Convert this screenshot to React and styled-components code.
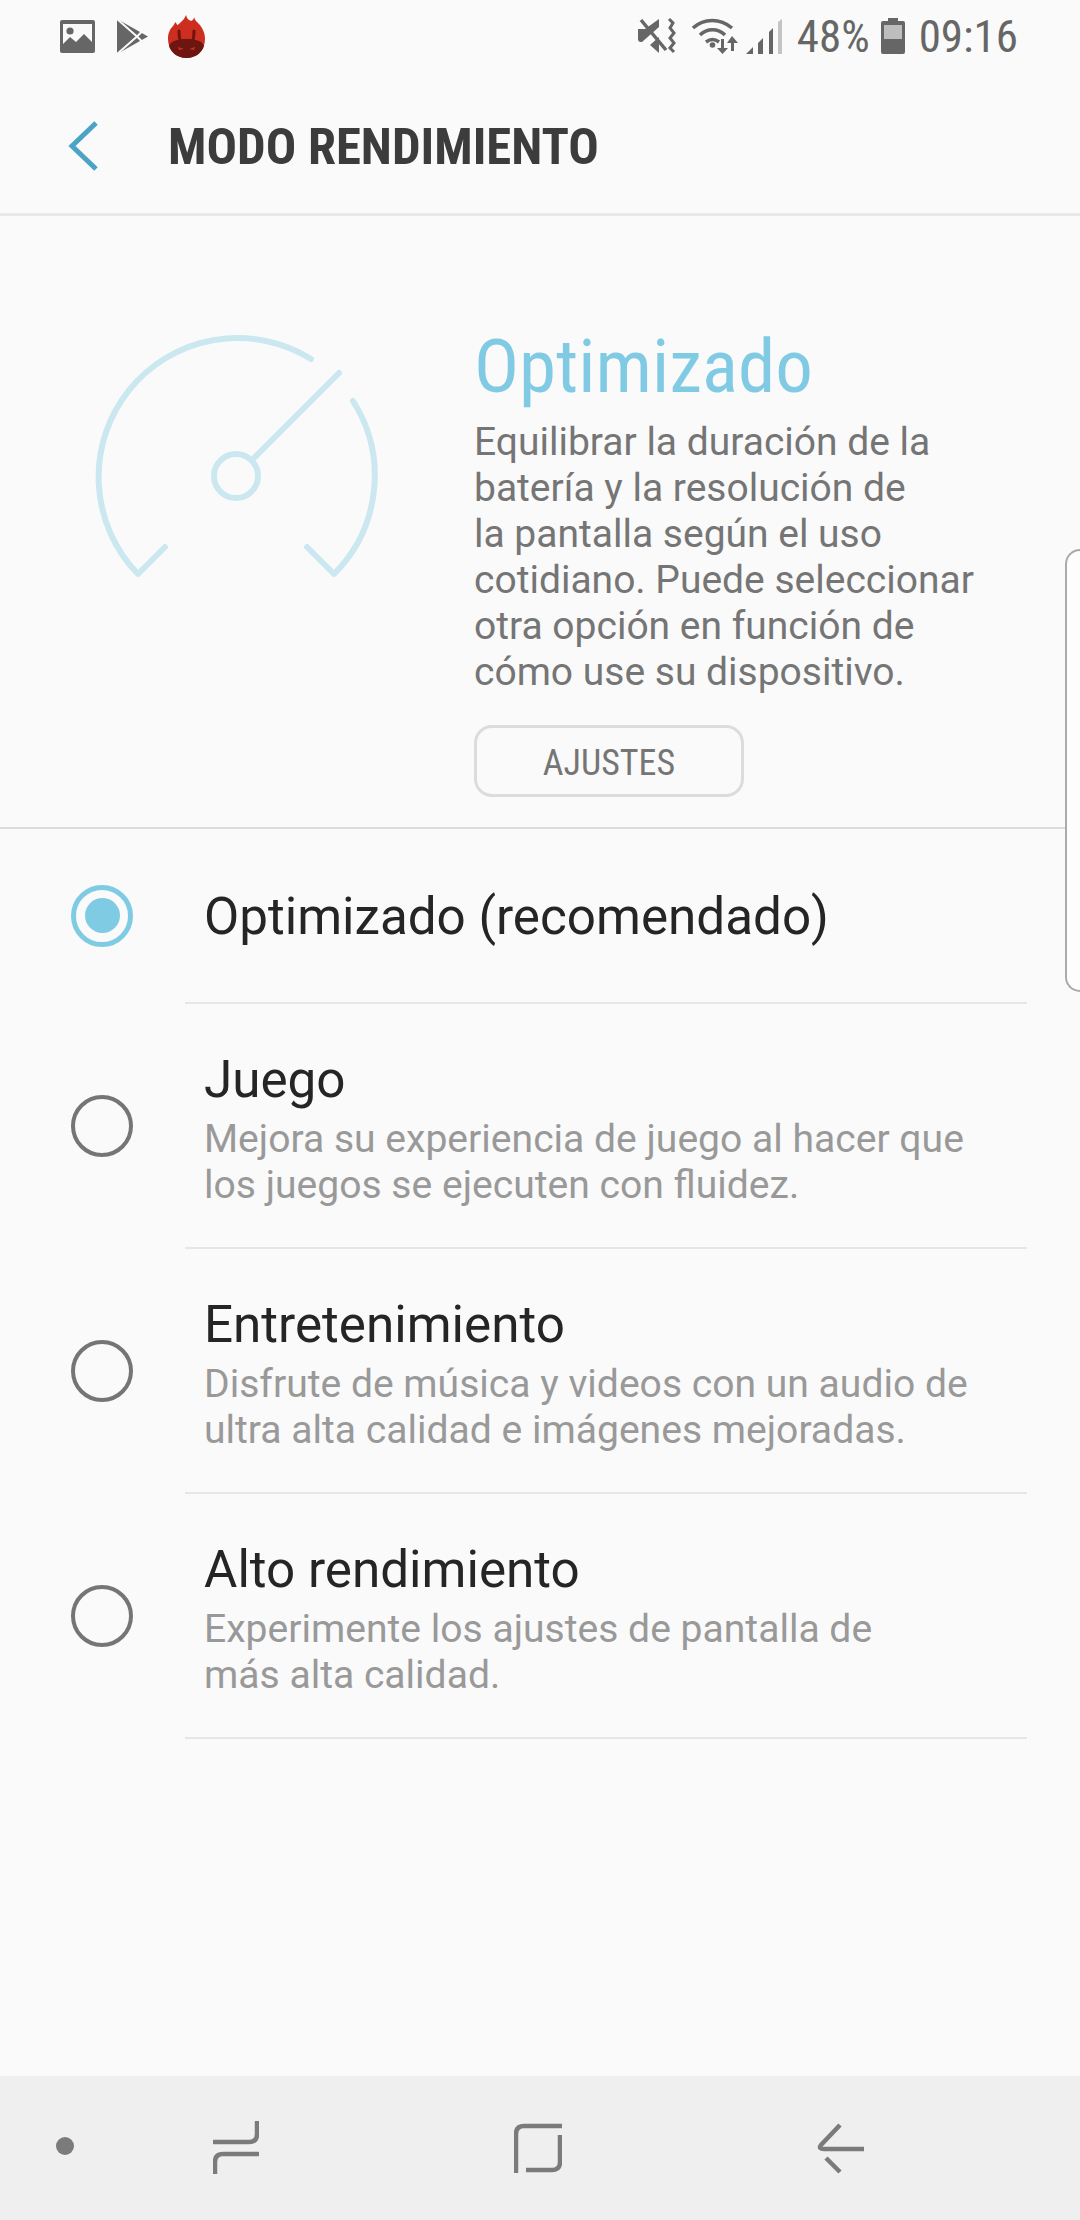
import React from "react";
import styled, { createGlobalStyle } from "styled-components";

const Global = createGlobalStyle`
  html, body { margin: 0; padding: 0; background: #fafafa; }
  body { font-family: Roboto, "Liberation Sans", sans-serif; }
`;

const Screen = styled.div`
  position: relative;
  width: 1080px;
  height: 2220px;
  background: #fafafa;
  display: flex;
  flex-direction: column;
  overflow: hidden;
`;

const StatusBar = styled.div`
  height: 72px;
  display: flex;
  align-items: center;
  padding: 0 62px 0 60px;
  color: #666;
`;
const StatusGroup = styled.div`
  display: flex;
  align-items: center;
`;
const Spacer = styled.div`flex: 1;`;
const StatusIcon = styled.svg`
  display: block;
  flex: none;
  margin-left: ${(p) => p.$ml || 0}px;
`;
const StatusText = styled.span`
  font-size: 45px;
  font-stretch: 75%;
  line-height: 72px;
  padding-top: 2px;
  margin-left: ${(p) => p.$ml || 0}px;
`;

const AppBar = styled.div`
  height: 144px;
  display: flex;
  align-items: center;
  padding: 7px 0 0 67px;
  box-sizing: border-box;
  border-bottom: 3px solid #e8e8e8;
  flex: none;
`;
const BackChevron = styled.svg`
  display: block;
  flex: none;
`;
const AppTitle = styled.h1`
  margin: 0 0 0 69px;
  font-size: 50.7px;
  font-weight: 700;
  font-stretch: 75%;
  color: #3c3c3c;
`;

const Hero = styled.section`
  height: 613px;
  flex: none;
  display: flex;
  padding: 113px 0 0 94px;
  box-sizing: border-box;
  border-bottom: 2px solid #dcdcdc;
`;
const Gauge = styled.svg`
  display: block;
  flex: none;
`;
const HeroText = styled.div`
  margin: -5px 0 0 95px;
  display: flex;
  flex-direction: column;
  align-items: flex-start;
`;
const HeroTitle = styled.h2`
  margin: 0;
  font-size: 75px;
  line-height: 84px;
  font-weight: 400;
  font-stretch: 75%;
  color: #80cbe3;
`;
const HeroDesc = styled.p`
  margin: 11px 0 0;
  font-size: 39px;
  line-height: 46px;
  color: #757575;
`;
const SettingsButton = styled.button`
  margin-top: 30px;
  width: 270px;
  height: 72px;
  box-sizing: border-box;
  border: 3px solid #dcdcdc;
  border-radius: 18px;
  background: transparent;
  color: #757575;
  font-family: inherit;
  font-size: 36px;
  font-stretch: 75%;
  padding: 4px 0 0;
`;

const List = styled.div`
  display: flex;
  flex-direction: column;
  padding: 0 53px 0 0;
`;
const Row = styled.div`
  display: flex;
  align-items: center;
  height: ${(p) => p.$h}px;
  box-sizing: border-box;
  padding-left: 71px;
`;
const Radio = styled.span`
  flex: none;
  width: 62px;
  height: 62px;
  margin-top: -2px;
  box-sizing: border-box;
  border-radius: 50%;
  border: ${(p) => (p.$on ? "5px solid #7fcbe4" : "4px solid #757575")};
  display: flex;
  align-items: center;
  justify-content: center;
`;
const RadioDot = styled.span`
  width: 35px;
  height: 35px;
  border-radius: 50%;
  background: #7fcbe4;
`;
const RowBody = styled.div`
  flex: 1;
  align-self: stretch;
  display: flex;
  flex-direction: column;
  justify-content: center;
  border-bottom: 2px solid #e6e6e6;
  margin-left: 52px;
  padding: ${(p) => p.$pt}px 0 0 19px;
`;
const RowTitle = styled.div`
  font-size: 51.2px;
  line-height: 58px;
  color: #252525;
`;
const RowDesc = styled.div`
  margin-top: 7px;
  font-size: 39.1px;
  line-height: 46px;
  color: #999;
`;

const Handle = styled.div`
  position: absolute;
  right: 0;
  top: 549px;
  width: 15px;
  height: 443px;
  box-sizing: border-box;
  border: 2px solid #aaa;
  border-right: none;
  border-radius: 16px 0 0 16px;
  background: #fdfdfd;
`;

const NavBar = styled.nav`
  margin-top: auto;
  height: 144px;
  flex: none;
  background: #efefef;
  display: flex;
  align-items: center;
  padding-left: 56px;
`;
const NavDot = styled.span`
  width: 18px;
  height: 18px;
  border-radius: 50%;
  background: #7b7b7b;
  margin-top: -4px;
`;
const NavIcon = styled.svg`
  display: block;
  flex: none;
  margin-left: ${(p) => p.$ml}px;
  fill: none;
  stroke: #7b7b7b;
  stroke-width: 4.5;
`;

const rows = [
  { title: "Juego", lines: ["Mejora su experiencia de juego al hacer que", "los juegos se ejecuten con fluidez."] },
  { title: "Entretenimiento", lines: ["Disfrute de música y videos con un audio de", "ultra alta calidad e imágenes mejoradas."] },
  { title: "Alto rendimiento", lines: ["Experimente los ajustes de pantalla de", "más alta calidad."] },
];

const Br = ({ lines }) => lines.map((l, i) => <React.Fragment key={i}>{l}{i < lines.length - 1 && <br />}</React.Fragment>);

export default function App() {
  return (
    <Screen>
      <Global />
      <StatusBar>
        <StatusGroup>
          <StatusIcon width="35" height="33" viewBox="0 0 35 33">
            <path fillRule="evenodd" fill="#666" d="M2 0h31a2 2 0 0 1 2 2v29a2 2 0 0 1-2 2H2a2 2 0 0 1-2-2V2a2 2 0 0 1 2-2zM3 4v20l7-7 6 5 8-8 8 8V4z" />
            <circle cx="10" cy="11" r="3.6" fill="#666" />
          </StatusIcon>
          <StatusIcon $ml={22} width="31" height="35" viewBox="0 0 31 35">
            <path fill="#666" d="M0 0l31 17.500L0 35z" />
            <path fill="none" stroke="#fafafa" strokeWidth="2" d="M0 0l20 17.500M0 35l20-17.500M20 17.500l5-5M20 17.500l5 5" />
          </StatusIcon>
          <StatusIcon $ml={20} width="37" height="43" viewBox="0 0 37 43">
            <path fill="#cc2e20" d="M18 0c1 4 3 5 5 6 2-1 3-2 3-4 1 3 2 4 4 6 4 4 7 9 7 16 0 11-8 19-18.500 19S0 35 0 24c0-6 2-10 5-13 1-1 2-3 2-4 1 1 2 2 2 3 1 0 2-1 4-3 2-2 4-4 5-7z" />
            <path fill="#6d1510" d="M1 31c2-5 8-7 17.500-7S34 26 36 31c-2 7-9 12-17.500 12S3 38 1 31z" />
            <path fill="none" stroke="#6d1510" strokeWidth="3" strokeLinecap="round" d="M12 25c-1-3-1-6-1-9M25 25c1-3 1-6 1-9" />
            <path fill="#cc2e20" d="M10 32l6 2-5 1zM27 32l-6 2 5 1z" />
          </StatusIcon>
        </StatusGroup>
        <Spacer />
        <StatusGroup>
          <StatusIcon width="38" height="37" viewBox="0 0 38 37">
            <path fill="#666" d="M0 11h7L21 1v8L4 24H3a3 3 0 0 1-3-3zM21 19v16L12 27z" />
            <path fill="none" stroke="#666" strokeWidth="3.500" d="M3 2l25 30" />
            <path fill="none" stroke="#666" strokeWidth="3" d="M31 1l4 4-3 5 4 5-4 5 4 5-4 5 4 4" />
          </StatusIcon>
          <StatusIcon $ml={16} width="46" height="36" viewBox="0 0 46 36">
            <g fill="none" stroke="#666" strokeWidth="3.500">
              <path d="M1 10C12 0 28 0 40 10" />
              <path d="M8 17c7-7 18-7 25 0" />
              <path d="M14 24c4-3 9-3 13 0" />
            </g>
            <circle cx="20.500" cy="27" r="2.800" fill="#666" />
            <path fill="#666" d="M29 21h3v9h4l-5.500 6L25 30h4zM40 18l6 7h-4v8h-3v-8h-4z" />
          </StatusIcon>
          <StatusIcon $ml={8} width="36" height="36" viewBox="0 0 36 36">
            <path fill="#666" d="M0 36l7-7v7zM12 25l5-5v16h-5zM23 14l4-4v26h-4z" />
            <path fill="#c4c4c4" d="M32 4l4-3v35h-4z" />
          </StatusIcon>
          <StatusText $ml={15}>48%</StatusText>
          <StatusIcon $ml={11} width="24" height="36" viewBox="0 0 24 36">
            <path fill="#666" d="M7 0h10v3h5a2 2 0 0 1 2 2v29a2 2 0 0 1-2 2H2a2 2 0 0 1-2-2V5a2 2 0 0 1 2-2h5z" />
            <rect x="3" y="7" width="18" height="14" fill="#bdbdbd" />
          </StatusIcon>
          <StatusText $ml={14}>09:16</StatusText>
        </StatusGroup>
      </StatusBar>
      <AppBar>
        <BackChevron width="32" height="50" viewBox="0 0 32 50" fill="none" stroke="#4ba3c6" strokeWidth="5">
          <path d="M29 2L5 25l24 23" />
        </BackChevron>
        <AppTitle>MODO RENDIMIENTO</AppTitle>
      </AppBar>
      <Hero>
        <Gauge width="285" height="255" viewBox="95 330 285 255" fill="none" stroke="#cbe8f1" strokeWidth="6" strokeLinecap="round" strokeLinejoin="round">
          <path d="M166 548L139 575A139 139 0 0 1 312 360" />
          <path d="M354 402A139 139 0 0 1 335 575L308 548" />
          <circle cx="237" cy="477" r="22" />
          <path d="M255 459L340 374" />
        </Gauge>
        <HeroText>
          <HeroTitle>Optimizado</HeroTitle>
          <HeroDesc>
            <Br lines={["Equilibrar la duración de la", "batería y la resolución de", "la pantalla según el uso", "cotidiano. Puede seleccionar", "otra opción en función de", "cómo use su dispositivo."]} />
          </HeroDesc>
          <SettingsButton>AJUSTES</SettingsButton>
        </HeroText>
      </Hero>
      <List>
        <Row $h={175}>
          <Radio $on><RadioDot /></Radio>
          <RowBody $pt={2}><RowTitle>Optimizado (recomendado)</RowTitle></RowBody>
        </Row>
        {rows.map((r) => (
          <Row $h={245} key={r.title}>
            <Radio />
            <RowBody $pt={8}>
              <RowTitle>{r.title}</RowTitle>
              <RowDesc><Br lines={r.lines} /></RowDesc>
            </RowBody>
          </Row>
        ))}
      </List>
      <Handle />
      <NavBar>
        <NavDot />
        <NavIcon $ml={139} width="46" height="54" viewBox="0 0 46 54"><path d="M0 21H36Q44 21 44 13V0M46 33H10Q2 33 2 41V53" /></NavIcon>
        <NavIcon $ml={255} width="48" height="50" viewBox="0 0 48 50"><path d="M2 50V11Q2 3 10 3H48M46 12V39Q46 47 38 47H12" /></NavIcon>
        <NavIcon $ml={254} width="50" height="54" viewBox="0 0 50 54"><path d="M24 4L5 24Q2 28 8 28H48M10 37L24 51" /></NavIcon>
      </NavBar>
    </Screen>
  );
}
